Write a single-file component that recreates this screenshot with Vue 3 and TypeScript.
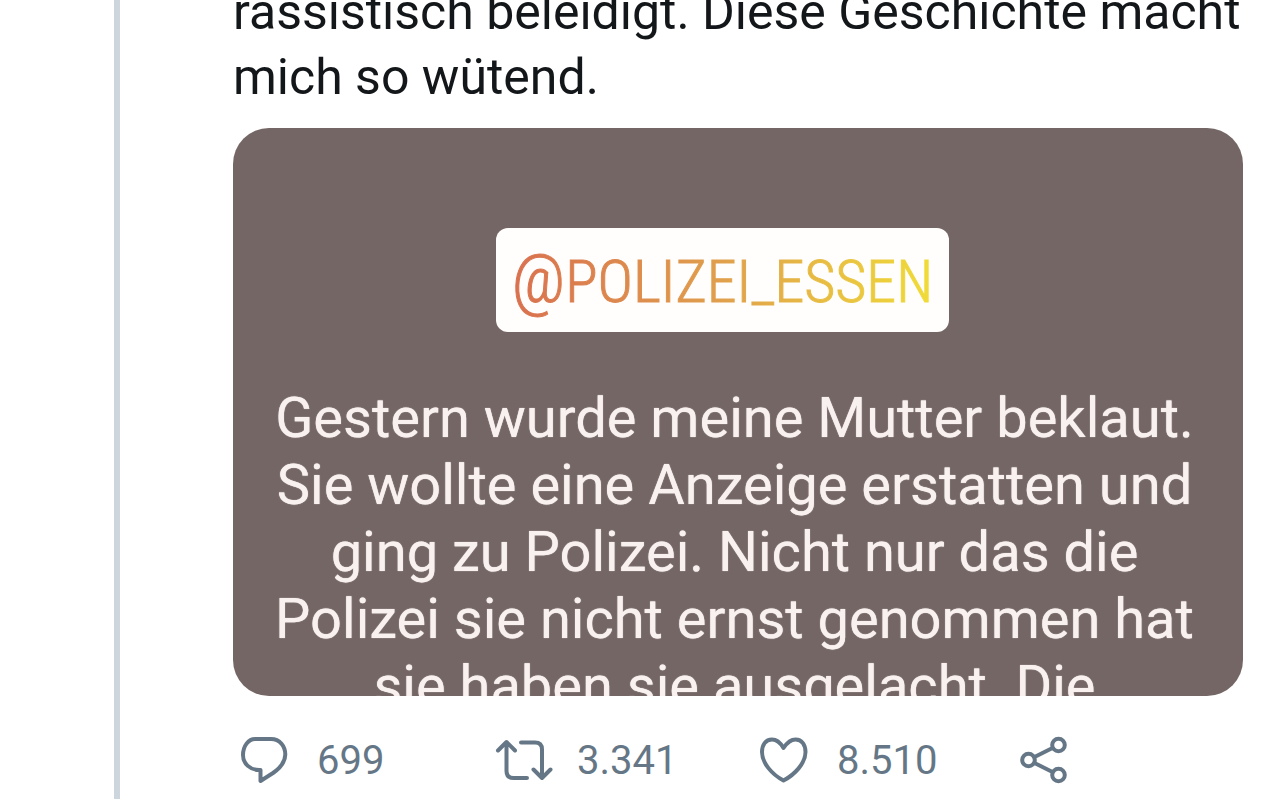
<script setup lang="ts">
import { ref } from 'vue'

const tweetLines: string[] = [
  'rassistisch beleidigt. Diese Geschichte macht',
  'mich so wütend.',
]

const storyLines: string[] = [
  'Gestern wurde meine Mutter beklaut.',
  'Sie wollte eine Anzeige erstatten und',
  'ging zu Polizei. Nicht nur das die',
  'Polizei sie nicht ernst genommen hat',
  'sie haben sie ausgelacht. Die',
]

const replies = ref('699')
const retweets = ref('3.341')
const likes = ref('8.510')
</script>

<template>
  <main class="thread">
    <div class="rail" aria-hidden="true"></div>
    <article class="tweet">
      <p class="tweet-text">
        <span v-for="line in tweetLines" :key="line" class="line">{{ line }}</span>
      </p>

      <section class="media">
        <a class="mention" href="#polizei_essen"><span class="mention-text"><span class="at">@</span>POLIZEI_ESSEN</span></a>
        <p class="story">
          <span v-for="line in storyLines" :key="line" class="line">{{ line }}</span>
        </p>
      </section>

      <footer class="actions">
        <button class="action" type="button" aria-label="Antworten">
          <svg class="icon" viewBox="0 0 56 56">
            <path d="M22 6H38C47 6 52.300 13.500 52.300 21.500C52.300 29.500 46.500 35.500 40 40L27.500 48V37C17 37.500 10 30.500 10 22C10 13 15.500 6 22 6Z" />
          </svg>
          <span>{{ replies }}</span>
        </button>
        <button class="action" type="button" aria-label="Retweeten">
          <svg class="icon" viewBox="0 0 56 56">
            <path d="M5 17.500L13.500 9L22 17.500M13.500 10V38Q13.500 45 20.500 45H34M28 9.500H42Q49 9.500 49 16.500V44M40.500 36.500L49 45L57.500 36.500" />
          </svg>
          <span>{{ retweets }}</span>
        </button>
        <button class="action" type="button" aria-label="Gefällt mir">
          <svg class="icon" viewBox="0 0 56 56">
            <path d="M30.500 15C27 9 23.500 6.500 19 6.500C12.500 6.500 9 12 9 19C9 30 19 41.500 30.500 47.500C42 41.500 52.500 30 52.500 19C52.500 12 49 6.500 42.500 6.500C38 6.500 34.500 9 30.500 15Z" />
          </svg>
          <span>{{ likes }}</span>
        </button>
        <button class="action" type="button" aria-label="Teilen">
          <svg class="icon" viewBox="0 0 56 56">
            <circle cx="15.500" cy="27" r="6.300" />
            <circle cx="45.500" cy="12" r="6.300" />
            <circle cx="45.500" cy="42" r="6.300" />
            <path d="M21.500 24L39.500 15M21.500 30L39.500 39" />
          </svg>
        </button>
      </footer>
    </article>
  </main>
</template>

<style>
body {
  margin: 0;
  background: #ffffff;
}
</style>

<style scoped>
.thread {
  display: flex;
  min-height: 100vh;
  overflow: hidden;
  font-family: Roboto, "Liberation Sans", sans-serif;
}

.rail {
  flex: none;
  width: 6px;
  margin-left: 114px;
  background: #cdd6dc;
}

.tweet {
  flex: 1;
  min-width: 0;
  padding: 0 37px 0 113px;
}

.line {
  display: block;
  white-space: nowrap;
}

.tweet-text {
  margin: -20px 0 18px;
  font-size: 50px;
  line-height: 65px;
  color: #14171a;
}

.media {
  display: flex;
  flex-direction: column;
  align-items: center;
  box-sizing: border-box;
  aspect-ratio: 16 / 9;
  padding: 100px 7px 0 0;
  overflow: hidden;
  border-radius: 36px;
  background: #746665;
}

.mention {
  display: flex;
  flex: none;
  align-items: center;
  box-sizing: border-box;
  height: 104px;
  margin-right: 24px;
  padding: 0 16px;
  border-radius: 12px;
  background: #fffefc;
  font-family: "Roboto Condensed", "Liberation Sans Narrow", Roboto, sans-serif;
  font-size: 60px;
  font-weight: 300;
  line-height: 80px;
  text-decoration: none;
}

.mention-text {
  background: linear-gradient(90deg, #d9704f, #e0a04c 50%, #f0dc38);
  background-clip: text;
  color: transparent;
  -webkit-text-stroke: 1px transparent;
}

.at {
  font-size: 68px;
}

.story {
  flex: none;
  margin: 53px 0 0;
  font-size: 56px;
  line-height: 67px;
  text-align: center;
  text-shadow: 0 0 1px #f8f1ef;
  color: #f8f1ef;
}

.actions {
  display: grid;
  grid-template-columns: 260fr 260fr 260fr 230fr;
  padding-top: 36px;
}

.action {
  display: flex;
  align-items: center;
  gap: 28px;
  padding: 0;
  border: 0;
  background: none;
  font-family: inherit;
  font-size: 40px;
  line-height: 58px;
  color: #657786;
  cursor: pointer;
}

.icon {
  flex: none;
  width: 56px;
  height: 56px;
  overflow: visible;
  fill: none;
  stroke: currentColor;
  stroke-width: 4;
  stroke-linecap: round;
  stroke-linejoin: round;
}
</style>
